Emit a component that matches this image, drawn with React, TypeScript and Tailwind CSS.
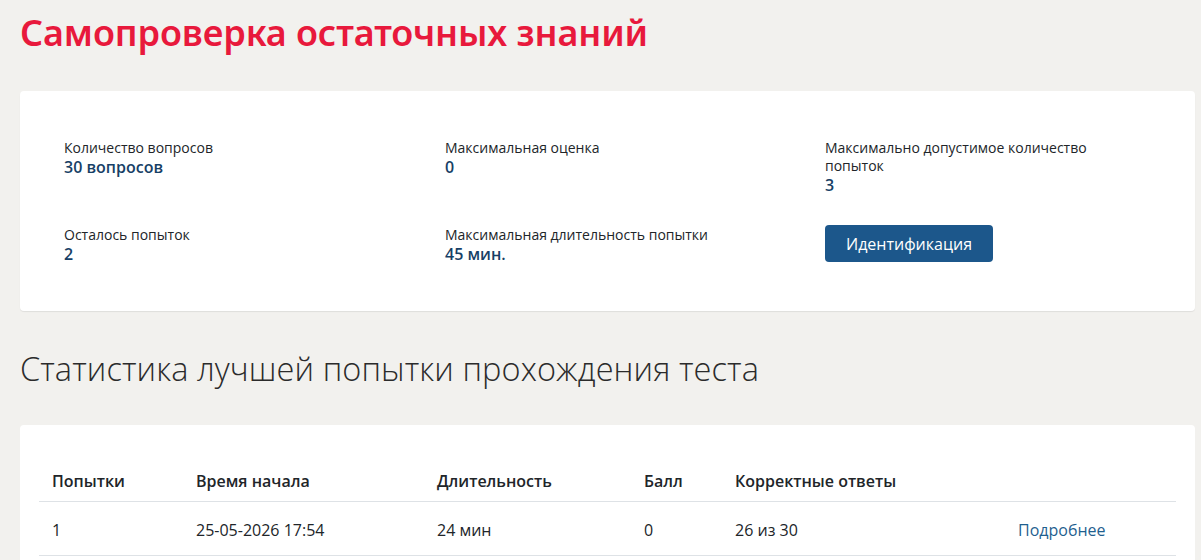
import React from "react";

const font = { fontFamily: '"Open Sans", "Noto Sans", sans-serif' };

function Field({ label, value, labelClass = "" }: { label: string; value: string; labelClass?: string }) {
  return (
    <div>
      <div className={`text-[14px] leading-[18px] text-[#212529] ${labelClass}`}>{label}</div>
      <div className="text-[16px] leading-[20px] font-semibold text-[#173f66]">{value}</div>
    </div>
  );
}

export default function App() {
  return (
    <div className="min-h-[560px] bg-[#f2f1ee] pl-[20px] pr-[6px] pt-[9px] pb-10" style={font}>
      <h1 className="text-[36px] leading-[48px] font-semibold text-[#e8193c] tracking-[-0.1px] [font-family:'Noto_Sans',sans-serif]">
        Самопроверка остаточных знаний
      </h1>

      <div className="mt-[34px] bg-white rounded-[4px] shadow-[0_1px_1px_rgba(0,0,0,0.08)] pl-[44px] pr-[20px] pt-[48px] pb-[47px]">
        <div className="grid grid-cols-[381px_380px_1fr] gap-y-[30px]">
          <Field label="Количество вопросов" value="30 вопросов" />
          <Field label="Максимальная оценка" value="0" />
          <Field label="Максимально допустимое количество попыток" value="3" labelClass="max-w-[290px]" />
          <div className="pt-[1px]"><Field label="Осталось попыток" value="2" /></div>
          <div className="pt-[1px]"><Field label="Максимальная длительность попытки" value="45 мин." /></div>
          <div>
            <button className="h-[37px] w-[168px] rounded-[4px] bg-[#1c578b] text-white text-[16px]">
              Идентификация
            </button>
          </div>
        </div>
      </div>

      <h2 className="mt-[37px] text-[32.5px] leading-[42px] font-light text-[#2b2b2b] tracking-[0.1px]">
        Статистика лучшей попытки прохождения теста
      </h2>

      <div className="mt-[35px] bg-white rounded-[4px] px-[19px] pt-[33px] pb-[30px]">
        <table className="w-full border-collapse text-[16px] text-[#212529]">
          <thead>
            <tr className="border-b border-[#dee2e6] text-left">
              <th className="font-semibold pl-[13px] pt-[11px] pb-[8px] w-[157px]">Попытки</th>
              <th className="font-semibold pl-0 pt-[11px] pb-[8px] w-[241px]">Время начала</th>
              <th className="font-semibold pt-[11px] pb-[8px] w-[207px]">Длительность</th>
              <th className="font-semibold pt-[11px] pb-[8px] w-[91px]">Балл</th>
              <th className="font-semibold pt-[11px] pb-[8px] w-[283px]">Корректные ответы</th>
              <th className="pt-[11px] pb-[8px]"></th>
            </tr>
          </thead>
          <tbody>
            <tr className="border-b border-[#dee2e6]">
              <td className="pl-[13px] pt-[16px] pb-[13px]">1</td>
              <td className="pt-[16px] pb-[13px]">25-05-2026 17:54</td>
              <td className="pt-[16px] pb-[13px]">24 мин</td>
              <td className="pt-[16px] pb-[13px]">0</td>
              <td className="pt-[16px] pb-[13px]">26 из 30</td>
              <td className="pt-[16px] pb-[13px] text-[#1f5f8f]">Подробнее</td>
            </tr>
          </tbody>
        </table>
      </div>
    </div>
  );
}
